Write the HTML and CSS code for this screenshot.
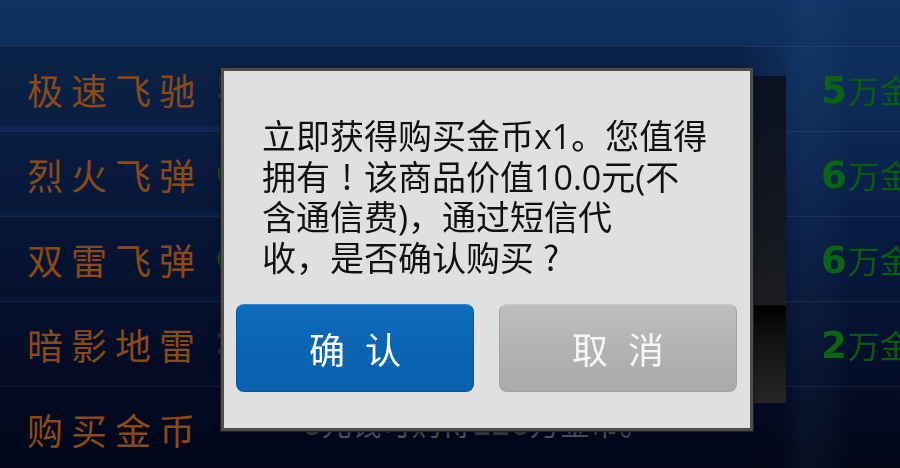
FILE: index.html
```html
<!DOCTYPE html>
<html lang="zh-CN">
<head>
  <meta charset="UTF-8" />
  <meta name="viewport" content="width=device-width, initial-scale=1.0"/>
  <title>购买金币</title>
  <link rel="stylesheet" href="styles.css">
</head>
<body>
  <div class="screen">
    <div class="top-bar"></div>

    <div class="shop-list">
      <div class="shop-row">
        <span class="item-name">极速飞驰</span>
        <span class="item-tag">5</span>
        <span class="item-price"><b>5</b>万金币</span>
      </div>
      <div class="shop-row">
        <span class="item-name">烈火飞弹</span>
        <span class="item-tag">6</span>
        <span class="item-price"><b>6</b>万金币</span>
      </div>
      <div class="shop-row">
        <span class="item-name">双雷飞弹</span>
        <span class="item-tag">6</span>
        <span class="item-price"><b>6</b>万金币</span>
      </div>
      <div class="shop-row">
        <span class="item-name">暗影地雷</span>
        <span class="item-tag">2</span>
        <span class="item-price"><b>2</b>万金币</span>
      </div>
      <div class="shop-row last">
        <span class="item-name">购买金币</span>
        <span class="coin-note"><b>6</b>元钱可购得<b>120</b>万金币。</span>
      </div>
    </div>

    <!-- buy button column, half hidden by the dialog -->
    <div class="side-button"></div>
  </div>

  <div class="overlay">
    <div class="dialog">
      <p class="dialog-message">立即获得购买金币x1。您值得<br>拥有<span class="punct">!</span>该商品价值10.0元(不<br>含通信费)，通过短信代<br>收，是否确认购买<span class="punct">?</span></p>
      <div class="dialog-actions">
        <button class="dialog-button confirm">确认</button>
        <button class="dialog-button cancel">取消</button>
      </div>
    </div>
  </div>
</body>
</html>
```

FILE: styles.css
```css
* {
  margin: 0;
  padding: 0;
  box-sizing: border-box;
}

html, body {
  width: 900px;
  height: 468px;
  overflow: hidden;
}

body {
  font-family: "Open Sans", "Noto Sans CJK SC", sans-serif;
  background:
    linear-gradient(90deg, transparent 780px, rgba(70, 130, 170, 0.08) 805px, rgba(70, 130, 170, 0.05) 830px, transparent 850px),
    linear-gradient(180deg, #0f3263 0%, #0c2954 25%, #081b42 50%, #050f2c 75%, #020617 100%);
}

.screen {
  position: relative;
  width: 900px;
  height: 468px;
  overflow: hidden;
  display: flex;
  flex-direction: column;
}

.top-bar {
  height: 46px;
  flex-shrink: 0;
}

.shop-list {
  display: flex;
  flex-direction: column;
  gap: 5px;
}

.shop-row {
  height: 80px;
  padding-top: 4px;
  display: flex;
  align-items: center;
  white-space: nowrap;
  background: linear-gradient(90deg, rgba(4, 8, 28, 0.32) 0, rgba(4, 8, 28, 0.32) 740px, transparent 790px);
  border-top: 1px solid rgba(95, 100, 120, 0.22);
}

.item-name {
  width: 216px;
  flex-shrink: 0;
  padding-left: 27px;
  font-family: "Noto Sans CJK SC", sans-serif;
  font-size: 36px;
  letter-spacing: 8px;
  color: #8a4a16;
}

.item-tag {
  font-family: "DejaVu Sans", sans-serif;
  font-weight: bold;
  font-size: 30px;
  color: #0c5e14;
}

.item-price {
  margin-left: auto;
  width: 79px;
  flex-shrink: 0;
  font-family: "Noto Sans CJK SC", sans-serif;
  font-size: 32px;
  color: #0a5a12;
}

.item-price b {
  font-family: "DejaVu Sans", sans-serif;
  font-weight: bold;
  font-size: 37px;
  letter-spacing: 1px;
  color: #0b6414;
}

.coin-note {
  margin-left: 86px;
  margin-top: -14px;
  font-family: "Noto Sans CJK SC", sans-serif;
  font-size: 30px;
  color: #4e5462;
}

.coin-note b {
  font-family: "DejaVu Sans", sans-serif;
  font-size: 28px;
  color: #3e4350;
}

.side-button {
  position: absolute;
  left: 740px;
  top: 76px;
  width: 46px;
  height: 327px;
  background: linear-gradient(180deg, #0a1222 0%, #13171f 45%, #1c1d20 70%, #000000 70.3%, #111111 80%, #262626 100%);
}

/* dialog */
.overlay {
  position: fixed;
  inset: 0;
  padding: 68px 0 0 221px;
}

.dialog {
  width: 532px;
  height: 363px;
  background: #e0e0e0;
  border: 3px solid #4d4d4d;
  box-shadow: 0 0 0 1px #1e1e1e, 0 2px 6px rgba(0, 0, 0, 0.5);
  display: flex;
  flex-direction: column;
}

.dialog-message {
  padding: 45px 20px 0 38px;
  font-size: 34px;
  line-height: 40px;
  color: #111111;
  white-space: nowrap;
}

/* full-width punctuation drawn centred in its cell */
.dialog-message .punct {
  display: inline-block;
  width: 1em;
  text-align: center;
  font-family: "Noto Sans CJK SC", sans-serif;
}

.dialog-actions {
  display: flex;
  gap: 25px;
  margin-top: 26px;
  padding: 0 13px 0 12px;
}

.dialog-button {
  flex: 1;
  height: 88px;
  border-radius: 8px;
  font-family: "Noto Sans CJK SC", sans-serif;
  font-size: 36px;
  letter-spacing: 20px;
  padding-left: 20px;
  color: #ffffff;
  cursor: pointer;
}

.dialog-button.confirm {
  background: linear-gradient(180deg, #0f6dbd 0%, #0a64b2 50%, #0862b0 100%);
  border: 1px solid #0657a2;
  border-top-color: #2f85cc;
}

.dialog-button.cancel {
  background: linear-gradient(180deg, #bebebe 0%, #b3b3b3 50%, #aaaaaa 100%);
  border: 1px solid #a2a2a2;
  border-top-color: #c8c8c8;
  color: #f6f6f6;
}
```
